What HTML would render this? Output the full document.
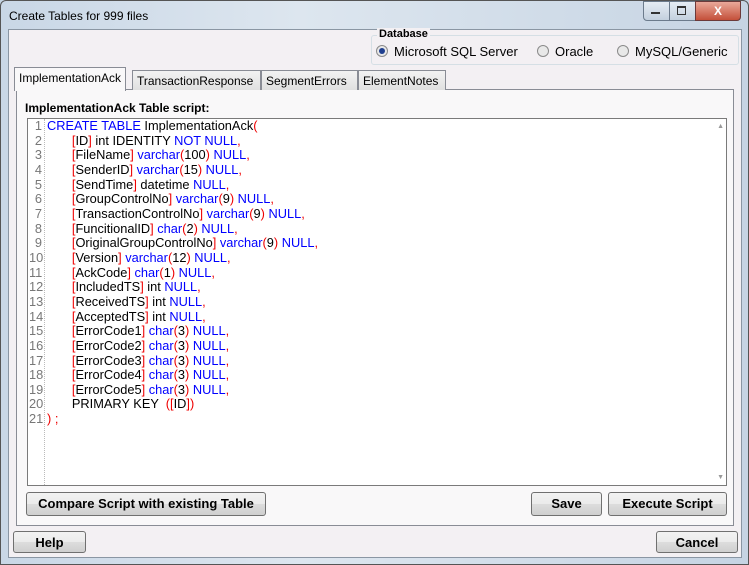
<!DOCTYPE html><html><head><style>
body{margin:0;width:749px;height:565px;overflow:hidden;font-family:"Liberation Sans",Arial,sans-serif;background:#c4d3e2}
.frame{position:absolute;left:0;top:0;width:747px;height:563px;border:1px solid #555;border-radius:6px 6px 0 0;background:linear-gradient(90deg,#c9d7e6,#dde6ef 40%,#c6d4e3)}
.title{position:absolute;left:9px;top:9px;font-size:12px;color:#000}
.client{position:absolute;left:8px;top:29px;width:732px;height:527px;background:#f3f0f3;border:1px solid #8a96a3}
.ab{position:absolute}
.btn{position:absolute;border:1px solid #707070;border-radius:3px;background:linear-gradient(#f2f2f2,#ebebeb 50%,#dddddd 50%,#cfcfcf);font-size:13px;font-weight:bold;text-align:center;box-sizing:border-box;line-height:21px}
.tab{position:absolute;top:70px;height:20px;border:1px solid #898c95;border-bottom:none;background:linear-gradient(#f2f2f2,#e0e0e0);font-size:12px;line-height:20px;padding:0 4px;box-sizing:border-box}
.code{position:absolute;left:27px;top:118px;width:698px;height:366px;background:#fff;border:1px solid #7a7a7a;font-size:12.8px}
.ln{position:absolute;left:0;top:0;width:16px;height:366px;border-right:1px dotted #bbb;color:#777;text-align:right}
.l{position:absolute;white-space:pre;line-height:14.65px}
.k{color:#00f}.r{color:#e00}
.radio{display:inline-block;width:10px;height:10px;border:1px solid #8a8a8a;border-radius:50%;background:#e8e8e8;vertical-align:-1px;margin-right:6px;position:relative}
</style></head><body>
<div class="frame"></div>
<div class="title">Create Tables for 999 files</div>
<div class="ab" style="left:643px;top:1px;width:26px;height:18px;border:1px solid #6c7b8c;border-radius:0 0 0 4px;background:linear-gradient(#e6edf4,#c3d0de)"></div>
<div class="ab" style="left:669px;top:1px;width:25px;height:18px;border:1px solid #6c7b8c;background:linear-gradient(#e6edf4,#c3d0de)"></div>
<div class="ab" style="left:695px;top:1px;width:44px;height:18px;border:1px solid #6c3a3a;border-radius:0 0 4px 0;background:linear-gradient(#e9a99a,#c4503a);color:#fff;font-weight:bold;font-size:12px;text-align:center;line-height:18px">X</div>
<div class="ab" style="left:651px;top:12px;width:9px;height:2px;background:#333"></div>
<div class="ab" style="left:677px;top:6px;width:7px;height:6px;border:1px solid #333;border-top-width:2px"></div>
<div class="client"></div>
<div class="ab" style="left:371px;top:35px;width:366px;height:28px;border:1px solid #d5dfe5;border-radius:3px"></div>
<div class="ab" style="left:377px;top:28px;font-size:11px;font-weight:bold;background:#f3f0f3;padding:0 2px">Database</div>
<div class="ab" style="left:376px;top:44px;font-size:13px"><span class="radio"><span style="position:absolute;left:2px;top:2px;width:6px;height:6px;border-radius:50%;background:#1f3f8f"></span></span>Microsoft SQL Server</div>
<div class="ab" style="left:537px;top:44px;font-size:13px"><span class="radio"></span>Oracle</div>
<div class="ab" style="left:617px;top:44px;font-size:13px"><span class="radio"></span>MySQL/Generic</div>
<div class="ab" style="left:16px;top:89px;width:716px;height:435px;border:1px solid #898c95;background:#f9f8f9"></div>
<div class="tab" style="left:14px;top:67px;height:24px;background:#f9f8f9;border-color:#898c95;z-index:2">ImplementationAck</div>
<div class="tab" style="left:132px;width:129px">TransactionResponse</div>
<div class="tab" style="left:261px;width:97px">SegmentErrors</div>
<div class="tab" style="left:358px;width:88px">ElementNotes</div>
<div class="ab" style="left:25px;top:101px;font-size:12px;font-weight:bold">ImplementationAck Table script:</div>
<div class="code"><div class="ln"></div>
<div class="ab" style="right:2px;top:4px;font-size:7px;color:#999">▲</div>
<div class="ab" style="right:2px;bottom:4px;font-size:7px;color:#999">▼</div>
<div class="l" style="left:1px;top:0;color:#777;text-align:right;width:13px">1
2
3
4
5
6
7
8
9
10
11
12
13
14
15
16
17
18
19
20
21</div>
<div class="l" style="left:19px;top:0"><span class="k">CREATE TABLE</span> ImplementationAck<span class="r">(</span>
       <span class="r">[</span>ID<span class="r">]</span> int IDENTITY <span class="k">NOT NULL</span><span class="r">,</span>
       <span class="r">[</span>FileName<span class="r">]</span> <span class="k">varchar</span><span class="r">(</span>100<span class="r">)</span> <span class="k">NULL</span><span class="r">,</span>
       <span class="r">[</span>SenderID<span class="r">]</span> <span class="k">varchar</span><span class="r">(</span>15<span class="r">)</span> <span class="k">NULL</span><span class="r">,</span>
       <span class="r">[</span>SendTime<span class="r">]</span> datetime <span class="k">NULL</span><span class="r">,</span>
       <span class="r">[</span>GroupControlNo<span class="r">]</span> <span class="k">varchar</span><span class="r">(</span>9<span class="r">)</span> <span class="k">NULL</span><span class="r">,</span>
       <span class="r">[</span>TransactionControlNo<span class="r">]</span> <span class="k">varchar</span><span class="r">(</span>9<span class="r">)</span> <span class="k">NULL</span><span class="r">,</span>
       <span class="r">[</span>FuncitionalID<span class="r">]</span> <span class="k">char</span><span class="r">(</span>2<span class="r">)</span> <span class="k">NULL</span><span class="r">,</span>
       <span class="r">[</span>OriginalGroupControlNo<span class="r">]</span> <span class="k">varchar</span><span class="r">(</span>9<span class="r">)</span> <span class="k">NULL</span><span class="r">,</span>
       <span class="r">[</span>Version<span class="r">]</span> <span class="k">varchar</span><span class="r">(</span>12<span class="r">)</span> <span class="k">NULL</span><span class="r">,</span>
       <span class="r">[</span>AckCode<span class="r">]</span> <span class="k">char</span><span class="r">(</span>1<span class="r">)</span> <span class="k">NULL</span><span class="r">,</span>
       <span class="r">[</span>IncludedTS<span class="r">]</span> int <span class="k">NULL</span><span class="r">,</span>
       <span class="r">[</span>ReceivedTS<span class="r">]</span> int <span class="k">NULL</span><span class="r">,</span>
       <span class="r">[</span>AcceptedTS<span class="r">]</span> int <span class="k">NULL</span><span class="r">,</span>
       <span class="r">[</span>ErrorCode1<span class="r">]</span> <span class="k">char</span><span class="r">(</span>3<span class="r">)</span> <span class="k">NULL</span><span class="r">,</span>
       <span class="r">[</span>ErrorCode2<span class="r">]</span> <span class="k">char</span><span class="r">(</span>3<span class="r">)</span> <span class="k">NULL</span><span class="r">,</span>
       <span class="r">[</span>ErrorCode3<span class="r">]</span> <span class="k">char</span><span class="r">(</span>3<span class="r">)</span> <span class="k">NULL</span><span class="r">,</span>
       <span class="r">[</span>ErrorCode4<span class="r">]</span> <span class="k">char</span><span class="r">(</span>3<span class="r">)</span> <span class="k">NULL</span><span class="r">,</span>
       <span class="r">[</span>ErrorCode5<span class="r">]</span> <span class="k">char</span><span class="r">(</span>3<span class="r">)</span> <span class="k">NULL</span><span class="r">,</span>
       PRIMARY KEY  <span class="r">([</span>ID<span class="r">])</span>
<span class="r">) ;</span></div>
</div>
<div class="btn" style="left:26px;top:492px;width:240px;height:24px">Compare Script with existing Table</div>
<div class="btn" style="left:531px;top:492px;width:71px;height:24px">Save</div>
<div class="btn" style="left:608px;top:492px;width:119px;height:24px">Execute Script</div>
<div class="btn" style="left:13px;top:531px;width:73px;height:22px">Help</div>
<div class="btn" style="left:656px;top:531px;width:82px;height:22px">Cancel</div>
</body></html>
